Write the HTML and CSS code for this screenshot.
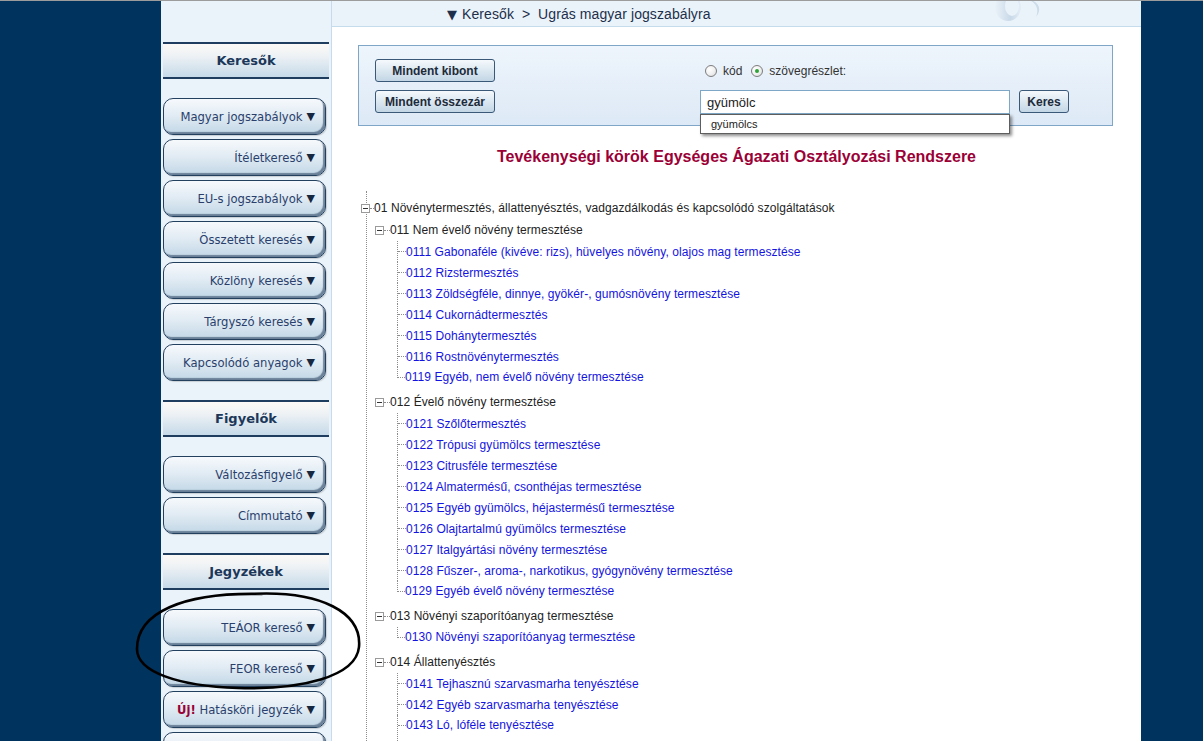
FILE: index.html
```html
<!DOCTYPE html>
<html lang="hu">
<head>
<meta charset="utf-8">
<title>TEÁOR kereső</title>
<link rel="stylesheet" href="styles.css">
</head>
<body>
<div class="topline"></div>
<div class="page">
  <aside class="sidebar">
    <div class="sec-head">Keresők</div>
    <nav class="btn-list">
      <a class="side-btn">Magyar jogszabályok <span class="arr">▼</span></a>
      <a class="side-btn">Ítéletkereső <span class="arr">▼</span></a>
      <a class="side-btn">EU-s jogszabályok <span class="arr">▼</span></a>
      <a class="side-btn">Összetett keresés <span class="arr">▼</span></a>
      <a class="side-btn">Közlöny keresés <span class="arr">▼</span></a>
      <a class="side-btn">Tárgyszó keresés <span class="arr">▼</span></a>
      <a class="side-btn">Kapcsolódó anyagok <span class="arr">▼</span></a>
    </nav>
    <div class="sec-head">Figyelők</div>
    <nav class="btn-list">
      <a class="side-btn">Változásfigyelő <span class="arr">▼</span></a>
      <a class="side-btn">Címmutató <span class="arr">▼</span></a>
    </nav>
    <div class="sec-head">Jegyzékek</div>
    <nav class="btn-list">
      <a class="side-btn">TEÁOR kereső <span class="arr">▼</span></a>
      <a class="side-btn">FEOR kereső <span class="arr">▼</span></a>
      <a class="side-btn"><b class="new">Új!</b>&nbsp;Hatásköri jegyzék <span class="arr">▼</span></a>
      <a class="side-btn"></a>
    </nav>
  </aside>

  <main class="main">
    <div class="topbar">
      <span class="crumb"><span class="crumb-arr">▼</span> Keresők &nbsp;&gt;&nbsp; Ugrás magyar jogszabályra</span>
      <svg class="logo" width="70" height="25" viewBox="0 0 70 25">
        <defs>
          <linearGradient id="lg1" x1="0" y1="0" x2="1" y2="0">
            <stop offset="0" stop-color="#eaf2f9"/>
            <stop offset="0.6" stop-color="#c9d9e7"/>
            <stop offset="1" stop-color="#e4eef7"/>
          </linearGradient>
        </defs>
        <ellipse cx="22" cy="6" rx="13" ry="14" fill="url(#lg1)"/>
        <ellipse cx="26" cy="5" rx="7" ry="10" fill="#eaf2f9"/>
        <path d="M38 -2 C 50 -2, 58 6, 50 16 C 54 6, 48 0, 40 -2 Z" fill="#cddcea"/>
      </svg>
    </div>

    <section class="panel">
      <div class="panel-left">
        <button class="pbtn">Mindent kibont</button>
        <button class="pbtn">Mindent összezár</button>
      </div>
      <div class="panel-right">
        <div class="radios">
          <span class="radio"></span><span class="rlabel">kód</span>
          <span class="radio checked"></span><span class="rlabel">szövegrészlet:</span>
        </div>
        <div class="search-row">
          <div class="input-wrap">
            <div class="input">gyümölc</div>
            <div class="suggest">gyümölcs</div>
          </div>
          <button class="pbtn keres">Keres</button>
        </div>
      </div>
    </section>

    <h1 class="title">Tevékenységi körök Egységes Ágazati Osztályozási Rendszere</h1>

    <div class="tree">
      <div class="row n1"><span class="box"></span><span class="hconn c1"></span><span class="label">01 Növénytermesztés, állattenyésztés, vadgazdálkodás és kapcsolódó szolgáltatások</span></div>

      <div class="group">
        <div class="row n2"><span class="box"></span><span class="hconn c2"></span><span class="label">011 Nem évelő növény termesztése</span></div>
        <div class="leaves">
          <div class="leaf"><span class="lconn"></span><a class="link">0111 Gabonaféle (kivéve: rizs), hüvelyes növény, olajos mag termesztése</a></div>
          <div class="leaf"><span class="lconn"></span><a class="link">0112 Rizstermesztés</a></div>
          <div class="leaf"><span class="lconn"></span><a class="link">0113 Zöldségféle, dinnye, gyökér-, gumósnövény termesztése</a></div>
          <div class="leaf"><span class="lconn"></span><a class="link">0114 Cukornádtermesztés</a></div>
          <div class="leaf"><span class="lconn"></span><a class="link">0115 Dohánytermesztés</a></div>
          <div class="leaf"><span class="lconn"></span><a class="link">0116 Rostnövénytermesztés</a></div>
          <div class="leaf"><span class="lconn"></span><a class="link">0119 Egyéb, nem évelő növény termesztése</a></div>
        </div>
      </div>

      <div class="group">
        <div class="row n2"><span class="box"></span><span class="hconn c2"></span><span class="label">012 Évelő növény termesztése</span></div>
        <div class="leaves">
          <div class="leaf"><span class="lconn"></span><a class="link">0121 Szőlőtermesztés</a></div>
          <div class="leaf"><span class="lconn"></span><a class="link">0122 Trópusi gyümölcs termesztése</a></div>
          <div class="leaf"><span class="lconn"></span><a class="link">0123 Citrusféle termesztése</a></div>
          <div class="leaf"><span class="lconn"></span><a class="link">0124 Almatermésű, csonthéjas termesztése</a></div>
          <div class="leaf"><span class="lconn"></span><a class="link">0125 Egyéb gyümölcs, héjastermésű termesztése</a></div>
          <div class="leaf"><span class="lconn"></span><a class="link">0126 Olajtartalmú gyümölcs termesztése</a></div>
          <div class="leaf"><span class="lconn"></span><a class="link">0127 Italgyártási növény termesztése</a></div>
          <div class="leaf"><span class="lconn"></span><a class="link">0128 Fűszer-, aroma-, narkotikus, gyógynövény termesztése</a></div>
          <div class="leaf"><span class="lconn"></span><a class="link">0129 Egyéb évelő növény termesztése</a></div>
        </div>
      </div>

      <div class="group">
        <div class="row n2"><span class="box"></span><span class="hconn c2"></span><span class="label">013 Növényi szaporítóanyag termesztése</span></div>
        <div class="leaves">
          <div class="leaf"><span class="lconn"></span><a class="link">0130 Növényi szaporítóanyag termesztése</a></div>
        </div>
      </div>

      <div class="group">
        <div class="row n2"><span class="box"></span><span class="hconn c2"></span><span class="label">014 Állattenyésztés</span></div>
        <div class="leaves">
          <div class="leaf"><span class="lconn"></span><a class="link">0141 Tejhasznú szarvasmarha tenyésztése</a></div>
          <div class="leaf"><span class="lconn"></span><a class="link">0142 Egyéb szarvasmarha tenyésztése</a></div>
          <div class="leaf cont"><span class="lconn"></span><a class="link">0143 Ló, lóféle tenyésztése</a></div>
        </div>
      </div>
    </div>
  </main>
</div>

<svg class="annot" width="1203" height="741" viewBox="0 0 1203 741">
  <path d="M 250 594 C 322 590, 362 613, 359 647 C 356 677, 300 690, 238 688 C 178 686, 137 672, 137 649 C 137 613, 182 592, 262 594" fill="none" stroke="#000" stroke-width="2.6" stroke-linecap="round"/>
</svg>
</body>
</html>
```

FILE: styles.css
```css
* { box-sizing: border-box; }

html, body {
  margin: 0;
  padding: 0;
  height: 100%;
  overflow: hidden;
}

body {
  background: #00335e;
  font-family: "Liberation Sans", Arial, sans-serif;
  position: relative;
}

.topline {
  height: 1px;
  background: #9c9c9c;
}

.page {
  display: flex;
  margin-left: 161px;
  width: 980px;
  height: 740px;
}

/* ---------- sidebar ---------- */
.sidebar {
  width: 171px;
  flex: none;
  background: #ebf3fa;
  border-right: 1px solid #c6dbeb;
  padding: 41px 0 0 2px;
  font-family: "DejaVu Sans", Verdana, sans-serif;
}

.sec-head {
  width: 166px;
  height: 37px;
  border-top: 2px solid #1e3d5f;
  border-bottom: 2px solid #1e3d5f;
  background: linear-gradient(#fcf9f6 0%, #eef2f5 35%, #c6dae9 100%);
  display: flex;
  align-items: center;
  justify-content: center;
  font-weight: bold;
  font-size: 13px;
  color: #1b3759;
}

.btn-list {
  display: flex;
  flex-direction: column;
  gap: 4px;
  margin: 19px 0 19px;
}

.side-btn {
  flex: none;
  width: 163px;
  height: 37px;
  border: 1px solid #23405f;
  border-radius: 10px;
  background: linear-gradient(#f6f9fc 0%, #e2ecf4 45%, #c2d7e6 100%);
  box-shadow: inset -2px -2px 1px rgba(30, 55, 85, 0.55), 1px 1px 1px rgba(0, 0, 0, 0.15);
  display: flex;
  align-items: center;
  justify-content: flex-end;
  padding-right: 10px;
  font-size: 11.6px;
  color: #2a3f6c;
  white-space: nowrap;
}

.side-btn .arr {
  color: #16283f;
  font-size: 11px;
  margin-left: 4px;
}

.side-btn .new {
  color: #990033;
  font-weight: bold;
}

/* ---------- main ---------- */
.main {
  width: 809px;
  flex: none;
  background: #fff;
}

.topbar {
  height: 26px;
  background: #ebf3fa;
  border-bottom: 1px solid #c5dcec;
  display: flex;
  align-items: center;
  padding-left: 115px;
}

.crumb {
  font-size: 14px;
  color: #1d2f4a;
  white-space: nowrap;
  letter-spacing: 0.08px;
}

.crumb-arr {
  font-family: "DejaVu Sans", sans-serif;
  font-size: 13px;
  margin-right: 1px;
}

.logo {
  margin-left: auto;
  margin-right: 85px;
  align-self: flex-start;
}

/* search panel */
.panel {
  margin: 18px 0 0 26px;
  width: 755px;
  height: 81px;
  border: 1px solid #7fa6c6;
  background: linear-gradient(#eef5fc, #dde9f6);
  padding: 13px 16px 0;
  display: flex;
  align-items: flex-start;
}

.panel-left {
  flex: none;
  display: flex;
  flex-direction: column;
  gap: 8px;
  width: 325px;
}

.pbtn {
  flex: none;
  width: 120px;
  height: 23px;
  padding: 0;
  border: 1px solid #3a5878;
  border-radius: 3px;
  background: linear-gradient(#f5f9fc, #d9e6f0 55%, #c3d6e5);
  font-family: "Liberation Sans", Arial, sans-serif;
  font-weight: bold;
  font-size: 12px;
  color: #1d2b3a;
}

.panel-right {
  flex: none;
  display: flex;
  flex-direction: column;
  gap: 8px;
}

.radios {
  flex: none;
  height: 23px;
  display: flex;
  align-items: center;
  padding-left: 5px;
  font-size: 12px;
  color: #333;
}

.radio {
  width: 12px;
  height: 12px;
  border-radius: 50%;
  border: 1px solid #7d7d7d;
  background: radial-gradient(circle at 35% 35%, #fff 0%, #f1f1f1 50%, #d6d6d6 100%);
  display: inline-flex;
  align-items: center;
  justify-content: center;
}

.radio.checked::after {
  content: "";
  width: 4px;
  height: 4px;
  border-radius: 50%;
  background: #2fa33a;
}

.rlabel {
  margin-left: 6px;
  margin-right: 9px;
}

.search-row {
  flex: none;
  display: flex;
  gap: 9px;
  align-items: flex-start;
}

.input-wrap {
  position: relative;
}

.input {
  width: 310px;
  height: 24px;
  border: 1px solid #7ea7c7;
  background: #fff;
  font-size: 13px;
  color: #222;
  padding: 0 6px;
  display: flex;
  align-items: center;
}

.suggest {
  position: absolute;
  left: 0;
  top: 24px;
  width: 310px;
  height: 20px;
  background: #fff;
  border: 1px solid #5e5e5e;
  box-shadow: 2px 2px 3px rgba(0, 0, 0, 0.45);
  font-size: 11px;
  color: #222;
  padding-left: 10px;
  display: flex;
  align-items: center;
  z-index: 2;
}

.pbtn.keres {
  width: 50px;
}

/* title */
.title {
  margin: 21px 0 0;
  text-align: center;
  font-size: 16px;
  line-height: 20px;
  font-weight: bold;
  color: #9b0036;
}

/* tree */
.tree {
  margin: 24px 0 0 34px;
  padding-top: 6px;
  border-left: 1px dotted #8c8c8c;
  font-size: 12px;
  color: #222;
  height: 560px;
  letter-spacing: 0.07px;
}

.row {
  display: flex;
  align-items: center;
  height: 22px;
  white-space: nowrap;
}

.box {
  width: 9px;
  height: 9px;
  flex: none;
  border: 1px solid #9a9a9a;
  background: #fff;
  display: flex;
  align-items: center;
  justify-content: center;
}

.box::after {
  content: "";
  width: 5px;
  height: 1px;
  background: #333;
}

.hconn {
  height: 1px;
  border-top: 1px dotted #8c8c8c;
  flex: none;
}

.n1 { margin-left: -6px; }
.c1 { width: 4px; }

.n2 { margin-left: 8px; }
.c2 { width: 6px; }

.group { margin-bottom: 3px; }

.leaves {
  margin-left: 30px;
}

.leaf {
  display: flex;
  align-items: center;
  height: 21px;
  border-left: 1px dotted #8c8c8c;
  white-space: nowrap;
}

.lconn {
  width: 8px;
  height: 1px;
  border-top: 1px dotted #8c8c8c;
  flex: none;
}

.leaf:last-child:not(.cont) {
  border-left: none;
  align-items: flex-start;
}

.leaf:last-child:not(.cont) .lconn {
  height: 11px;
  border-top: none;
  border-left: 1px dotted #8c8c8c;
  border-bottom: 1px dotted #8c8c8c;
}

.leaf:last-child:not(.cont) .link {
  line-height: 21px;
}

.leaf.cont {
  height: 40px;
  align-items: flex-start;
}

.leaf.cont .lconn {
  margin-top: 10px;
}

.leaf.cont .link {
  line-height: 21px;
}

.link {
  color: #1414e0;
  text-decoration: none;
}

/* hand-drawn annotation */
.annot {
  position: absolute;
  left: 0;
  top: 0;
  pointer-events: none;
}
```
